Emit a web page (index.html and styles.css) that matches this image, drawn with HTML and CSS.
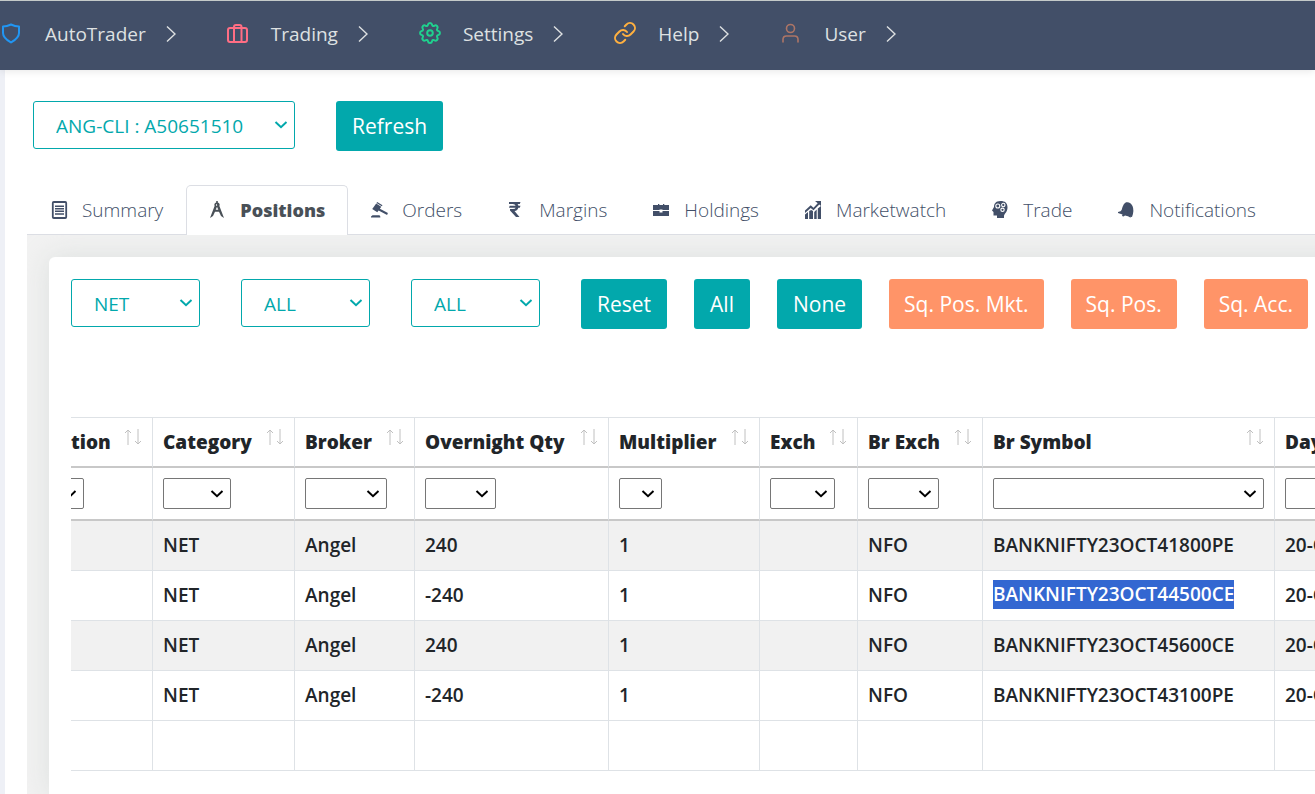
FILE: index.html
```
<!DOCTYPE html>
<html lang="en">
<head>
<meta charset="utf-8">
<title>AutoTrader Positions</title>
<link rel="stylesheet" href="styles.css">
</head>
<body>
<nav class="topbar">
  <a class="nav-item" href="#">
    <svg class="nav-icon blue" viewBox="0 0 22 22"><path d="M2 4.500 Q6 4.500 10 2.500 Q14 4.500 18 4.500 V11 C18 16 13.500 18.500 10 20.500 C6.500 18.500 2 16 2 11 Z"/></svg>
    <span>AutoTrader</span>
    <svg class="nav-arrow" viewBox="0 0 10 18"><path d="M1 1.500 L9 9 L1 16.500"/></svg>
  </a>
  <a class="nav-item" href="#">
    <svg class="nav-icon pink" viewBox="0 0 22 22"><rect x="1" y="6" width="19" height="14" rx="2"/><path d="M7 20 V5 Q7 3 9 3 H12.500 Q14.500 3 14.500 5 V20"/></svg>
    <span>Trading</span>
    <svg class="nav-arrow" viewBox="0 0 10 18"><path d="M1 1.500 L9 9 L1 16.500"/></svg>
  </a>
  <a class="nav-item" href="#">
    <svg class="nav-icon green" viewBox="1 1 22 22"><path d="M9.940 3.750A2.100 2.100 0 0 1 14.060 3.750A1.400 1.400 0 0 0 16.380 4.710A2.100 2.100 0 0 1 19.290 7.620A1.400 1.400 0 0 0 20.250 9.940A2.100 2.100 0 0 1 20.250 14.060A1.400 1.400 0 0 0 19.290 16.380A2.100 2.100 0 0 1 16.380 19.290A1.400 1.400 0 0 0 14.060 20.250A2.100 2.100 0 0 1 9.940 20.250A1.400 1.400 0 0 0 7.620 19.290A2.100 2.100 0 0 1 4.710 16.380A1.400 1.400 0 0 0 3.750 14.060A2.100 2.100 0 0 1 3.750 9.940A1.400 1.400 0 0 0 4.710 7.620A2.100 2.100 0 0 1 7.620 4.710A1.400 1.400 0 0 0 9.940 3.750Z"/><circle cx="12" cy="12" r="2.800"/></svg>
    <span>Settings</span>
    <svg class="nav-arrow" viewBox="0 0 10 18"><path d="M1 1.500 L9 9 L1 16.500"/></svg>
  </a>
  <a class="nav-item" href="#">
    <svg class="nav-icon amber" viewBox="1 1 22 22"><path d="M10 13a5 5 0 0 0 7.540.54l3-3a5 5 0 0 0-7.070-7.070l-1.720 1.710"/><path d="M14 11a5 5 0 0 0-7.540-.54l-3 3a5 5 0 0 0 7.070 7.070l1.710-1.710"/></svg>
    <span>Help</span>
    <svg class="nav-arrow" viewBox="0 0 10 18"><path d="M1 1.500 L9 9 L1 16.500"/></svg>
  </a>
  <a class="nav-item" href="#">
    <svg class="nav-icon brown" viewBox="0 0 22 22"><circle cx="10.500" cy="6.500" r="4"/><path d="M3 20 V17.500 Q3 14 6.500 14 H14.500 Q18 14 18 17.500 V20"/></svg>
    <span>User</span>
    <svg class="nav-arrow" viewBox="0 0 10 18"><path d="M1 1.500 L9 9 L1 16.500"/></svg>
  </a>
</nav>

<main class="page">
  <div class="account-bar">
    <select class="picker picker-wide" aria-label="Account"><option>ANG-CLI : A50651510</option></select>
    <button class="btn" type="button">Refresh</button>
  </div>

  <div class="workspace">
    <nav class="tabs">
      <a class="tab" href="#">
        <svg class="tab-icon" viewBox="0 0 17 18"><rect x="1.800" y="1" width="13.400" height="16" rx="1" fill="none" stroke="currentColor" stroke-width="1.800"/><path d="M4 4.500h9v1.500H4zM4 7h9v1.500H4zM4 9.500h9v1.500H4zM4 12.300h9v1.500H4z"/></svg>
        <span>Summary</span>
      </a>
      <a class="tab tab-active" href="#">
        <svg class="tab-icon" viewBox="0 0 17 18"><path d="M7.200 0h1.600v1.500A2.500 2.500 0 0 1 10.400 5l4.600 12-3-2-2-4.200H6L4 15l-3 2L5.600 5A2.500 2.500 0 0 1 7.200 1.500zM8 3a1 1 0 1 0 .1 2zM6.700 8.800h2.600L8 5.700z"/></svg>
        <span>Positions</span>
      </a>
      <a class="tab" href="#">
        <svg class="tab-icon" viewBox="0 0 17 18"><path d="M6.200 1l5.300 3.200-.7 1L5.500 2zM1.200 8l.8-1 5 3.200-.7 1zM5.200 2.600l5 3.100-1.300 2.100 8 4.200-.8 2-8.500-4.600-.8 1-5-3.100zM1.500 14.300h7l.8 1.200v1H0v-1z"/></svg>
        <span>Orders</span>
      </a>
      <a class="tab" href="#">
        <svg class="tab-icon" viewBox="0 0 17 18"><path d="M1 1h11.500l-.7 2H9.500q.8.800.9 1.700h2.100l-.7 2h-1.500Q9.700 9.600 6.500 10l5 6H8L2 9.500V8h3q2.200 0 2.700-1.300H1l.7-2h5.900Q7.100 3 4.800 3H1z"/></svg>
        <span>Margins</span>
      </a>
      <a class="tab" href="#">
        <svg class="tab-icon" viewBox="0 0 17 18"><path d="M5 3h1.300v1H10V3h1.300v1H16v5H9.500V8.500h-3V9H0V4h5zM0 10h6.500v1.500h3V10H16v5H0z"/></svg>
        <span>Holdings</span>
      </a>
      <a class="tab" href="#">
        <svg class="tab-icon" viewBox="0 0 17 18"><path d="M0 13.500l3-2.500v7H0zM4.200 10l2-1L8 10v8H4.200zM9.200 11l2.500-2.500V18H9.200zM12.800 7.500L16 5v13h-3.200zM10 0h6v5l-1.700-1.500L8.500 9.200 5.700 7 0 12V9.500L5.700 4.300l2.800 2.500 4.200-4.600z"/></svg>
        <span>Marketwatch</span>
      </a>
      <a class="tab" href="#">
        <svg class="tab-icon" viewBox="0 0 17 18"><path d="M8.500 0C3.500 0 2 3 2 6L0 9.500 1.500 11v3.500H5V17h7v-2c0-2 3.500-4 3.500-8.500S13 0 8.500 0z"/><g fill="none" stroke="#fff" stroke-width="1.100"><circle cx="5.800" cy="5" r="2"/><circle cx="11.300" cy="4" r="1.700"/><circle cx="10.500" cy="8.800" r="1.700"/></g></svg>
        <span>Trade</span>
      </a>
      <a class="tab" href="#">
        <svg class="tab-icon" viewBox="0 0 17 18"><path d="M8 1.300Q12.500.5 14.500 5t-.5 11l-1.500-.3.200 1-2.700-1.500-3-.7-1.500 1-1.500-.6.500-1.500L0 12v-1l2.500-.7Q4 9 4.500 6T8 1.300z"/></svg>
        <span>Notifications</span>
      </a>
    </nav>

    <div class="panel">
      <section class="card">
        <div class="toolbar">
          <div class="filters">
            <select class="picker" aria-label="Position type"><option>NET</option></select>
            <select class="picker" aria-label="Category"><option>ALL</option></select>
            <select class="picker" aria-label="State"><option>ALL</option></select>
          </div>
          <div class="actions">
            <button class="btn" type="button">Reset</button>
            <button class="btn" type="button">All</button>
            <button class="btn" type="button">None</button>
            <button class="btn btn-warn" type="button">Sq. Pos. Mkt.</button>
            <button class="btn btn-warn" type="button">Sq. Pos.</button>
            <button class="btn btn-warn" type="button">Sq. Acc.</button>
          </div>
        </div>

        <div class="table-scroll">
          <table class="grid">
            <colgroup>
              <col class="w81"><col class="w142"><col class="w120"><col class="w194"><col class="w151"><col class="w98"><col class="w125"><col class="w292"><col>
            </colgroup>
            <thead>
              <tr class="head">
                <th><div class="th">tion<svg class="sort" viewBox="0 0 18 16"><path d="M4 16V1M1 4l3-3 3 3"/><path d="M14 0v15M11 12l3 3 3-3"/></svg></div></th>
                <th><div class="th">Category<svg class="sort" viewBox="0 0 18 16"><path d="M4 16V1M1 4l3-3 3 3"/><path d="M14 0v15M11 12l3 3 3-3"/></svg></div></th>
                <th><div class="th">Broker<svg class="sort" viewBox="0 0 18 16"><path d="M4 16V1M1 4l3-3 3 3"/><path d="M14 0v15M11 12l3 3 3-3"/></svg></div></th>
                <th><div class="th">Overnight Qty<svg class="sort" viewBox="0 0 18 16"><path d="M4 16V1M1 4l3-3 3 3"/><path d="M14 0v15M11 12l3 3 3-3"/></svg></div></th>
                <th><div class="th">Multiplier<svg class="sort" viewBox="0 0 18 16"><path d="M4 16V1M1 4l3-3 3 3"/><path d="M14 0v15M11 12l3 3 3-3"/></svg></div></th>
                <th><div class="th">Exch<svg class="sort" viewBox="0 0 18 16"><path d="M4 16V1M1 4l3-3 3 3"/><path d="M14 0v15M11 12l3 3 3-3"/></svg></div></th>
                <th><div class="th">Br Exch<svg class="sort" viewBox="0 0 18 16"><path d="M4 16V1M1 4l3-3 3 3"/><path d="M14 0v15M11 12l3 3 3-3"/></svg></div></th>
                <th><div class="th">Br Symbol<svg class="sort" viewBox="0 0 18 16"><path d="M4 16V1M1 4l3-3 3 3"/><path d="M14 0v15M11 12l3 3 3-3"/></svg></div></th>
                <th><div class="th">Day</div></th>
              </tr>
              <tr class="filter">
                <td><select class="mini scrolled" aria-label="Filter"></select></td>
                <td><select class="mini s68" aria-label="Filter category"></select></td>
                <td><select class="mini s82" aria-label="Filter broker"></select></td>
                <td><select class="mini s71" aria-label="Filter overnight quantity"></select></td>
                <td><select class="mini s43" aria-label="Filter multiplier"></select></td>
                <td><select class="mini s65" aria-label="Filter exchange"></select></td>
                <td><select class="mini s71" aria-label="Filter broker exchange"></select></td>
                <td><select class="mini s271" aria-label="Filter broker symbol"></select></td>
                <td><select class="mini s71" aria-label="Filter day"></select></td>
              </tr>
            </thead>
            <tbody>
              <tr><td></td><td>NET</td><td>Angel</td><td>240</td><td>1</td><td></td><td>NFO</td><td>BANKNIFTY23OCT41800PE</td><td>20-O</td></tr>
              <tr><td></td><td>NET</td><td>Angel</td><td>-240</td><td>1</td><td></td><td>NFO</td><td><span class="selected">BANKNIFTY23OCT44500CE</span></td><td>20-O</td></tr>
              <tr><td></td><td>NET</td><td>Angel</td><td>240</td><td>1</td><td></td><td>NFO</td><td>BANKNIFTY23OCT45600CE</td><td>20-O</td></tr>
              <tr><td></td><td>NET</td><td>Angel</td><td>-240</td><td>1</td><td></td><td>NFO</td><td>BANKNIFTY23OCT43100PE</td><td>20-O</td></tr>
            </tbody>
            <tfoot>
              <tr><td></td><td></td><td></td><td></td><td></td><td></td><td></td><td></td><td></td></tr>
            </tfoot>
          </table>
        </div>
      </section>
    </div>
  </div>
</main>
</body>
</html>
```
FILE: styles.css
```
* { box-sizing: border-box; }

body {
  margin: 0;
  min-height: 100vh;
  display: flex;
  flex-direction: column;
  background: #eef0f6;
  color: #212529;
  font-family: "Open Sans", sans-serif;
  overflow: hidden;
}

a { color: inherit; text-decoration: none; }

svg { flex: none; }

/* Top navigation */
.topbar {
  display: flex;
  gap: 51px;
  height: 70px;
  padding: 0 1px 4px;
  align-items: center;
  background: #424f68;
  border-top: 1px solid #c4cac9;
  box-shadow: 0 1px 8px rgba(0, 0, 0, 0.1);
  position: relative;
}

.nav-item {
  display: flex;
  align-items: center;
  color: #dee1e2;
  font-size: 19px;
  line-height: 28px;
}

.nav-icon {
  width: 22px;
  height: 22px;
  margin-right: 22px;
  margin-bottom: 2px;
  fill: none;
  stroke: currentColor;
  stroke-width: 2;
  stroke-linecap: round;
  stroke-linejoin: round;
}

.nav-arrow {
  width: 10px;
  height: 18px;
  margin-left: 20px;
  fill: none;
  stroke: currentColor;
  stroke-width: 1.4;
}

.blue { color: #2196f3; }
.pink { color: #ff6e84; }
.green { color: #1fd18e; }
.amber { color: #ffb03f; }
.brown { color: #ad7566; stroke-width: 1.6; }

/* Page */
.page {
  flex: 1;
  display: flex;
  flex-direction: column;
  margin-left: 5px;
  padding: 31px 0 0 22px;
  background: #fff;
}

.account-bar {
  display: flex;
  gap: 41px;
  padding-left: 6px;
  margin-bottom: 34px;
}

.picker {
  appearance: none;
  width: 129px;
  height: 48px;
  padding: 1px 22px 0;
  border: 1px solid #02a8ac;
  border-radius: 3px;
  background: #fff url("data:image/svg+xml,%3Csvg xmlns='http://www.w3.org/2000/svg' width='14' height='8'%3E%3Cpath d='M1.500 1L7 6.200 12.500 1' fill='none' stroke='%2302a8ac' stroke-width='2'/%3E%3C/svg%3E") no-repeat right 6px center;
  color: #02a8ac;
  font: 400 19px "Open Sans", sans-serif;
}

.picker-wide { width: 262px; }

.btn {
  height: 50px;
  padding: 0 16px;
  border: 0;
  border-radius: 3px;
  background: #02a8ac;
  color: #fff;
  font: 400 21px "Open Sans", sans-serif;
  white-space: nowrap;
}

.btn-warn {
  padding: 0 15px;
  background: #ff9468;
}

/* Tabs */
.workspace {
  flex: 1;
  display: flex;
  flex-direction: column;
}

.tabs {
  display: flex;
  height: 50px;
  padding-left: 1px;
  border-bottom: 1px solid #dcdee4;
}

.tab {
  display: flex;
  gap: 14px;
  align-items: center;
  height: 51px;
  padding: 0 22px 2px;
  border: 1px solid transparent;
  border-bottom: 0;
  border-radius: 5px 5px 0 0;
  color: #424f68;
  font-size: 19px;
  font-weight: 300;
}

.tab-active {
  background: #fff;
  border-color: #dcdee4;
  color: #495057;
  font-size: 18px;
  font-weight: 800;
}

.tab-icon {
  width: 17px;
  height: 18px;
  fill: currentColor;
}

/* Card */
.panel {
  flex: 1;
  display: flex;
  background: #f2f2f2;
  padding: 22px 0 0 22px;
  overflow: hidden;
}

.card {
  flex: 1;
  min-width: 0;
  margin-right: -44px;
  padding: 22px 0 22px 22px;
  border-radius: 6px 0 0 0;
  background: #fff;
  box-shadow: 0 0 28px rgba(200, 208, 204, 0.5);
}

.toolbar {
  display: flex;
  gap: 41px;
  margin-bottom: 88px;
}

.filters { display: flex; gap: 41px; }

.actions { display: flex; gap: 27px; }

/* Table */
.table-scroll { overflow: hidden; }

.grid {
  width: 100%;
  table-layout: fixed;
  border-collapse: separate;
  border-spacing: 0;
  border-top: 1px solid #dee2e6;
  font-size: 19px;
  font-weight: 600;
}

.w81 { width: 81px; }
.w98 { width: 98px; }
.w120 { width: 120px; }
.w125 { width: 125px; }
.w142 { width: 142px; }
.w151 { width: 151px; }
.w194 { width: 194px; }
.w292 { width: 292px; }

.grid th,
.grid td {
  height: 50px;
  padding: 0 10px;
  border-left: 1px solid #dee2e6;
  border-bottom: 1px solid #dee2e6;
  text-align: left;
  white-space: nowrap;
}

.grid tbody td { padding-bottom: 2px; }

.grid th:first-child,
.grid td:first-child {
  padding-left: 0;
  border-left: 0;
}

.grid .head th {
  font-weight: 800;
  border-bottom: 2px solid #c8c8c8;
}

.grid .filter td {
  height: 53px;
  border-bottom: 2px solid #c8c8c8;
}

.grid tbody tr:nth-child(odd) { background: #f1f1f1; }

.th {
  display: flex;
  justify-content: space-between;
  align-items: center;
}

.sort {
  width: 18px;
  height: 16px;
  margin-bottom: 10px;
  fill: none;
  stroke: #c0c0c0;
}

.mini {
  appearance: none;
  display: block;
  height: 31px;
  border: 1px solid #767676;
  border-radius: 2px;
  background: #fff url("data:image/svg+xml,%3Csvg xmlns='http://www.w3.org/2000/svg' width='14' height='8'%3E%3Cpath d='M1.500 1L7 6.200 12.500 1' fill='none' stroke='%23000' stroke-width='2'/%3E%3C/svg%3E") no-repeat right 6px center;
}

.scrolled { width: 43px; margin-left: -30px; }
.s43 { width: 43px; }
.s65 { width: 65px; }
.s68 { width: 68px; }
.s71 { width: 71px; }
.s82 { width: 82px; }
.s271 { width: 271px; }

.selected {
  display: inline-block;
  line-height: 29px;
  background: #3367d1;
  color: #fff;
}
```
